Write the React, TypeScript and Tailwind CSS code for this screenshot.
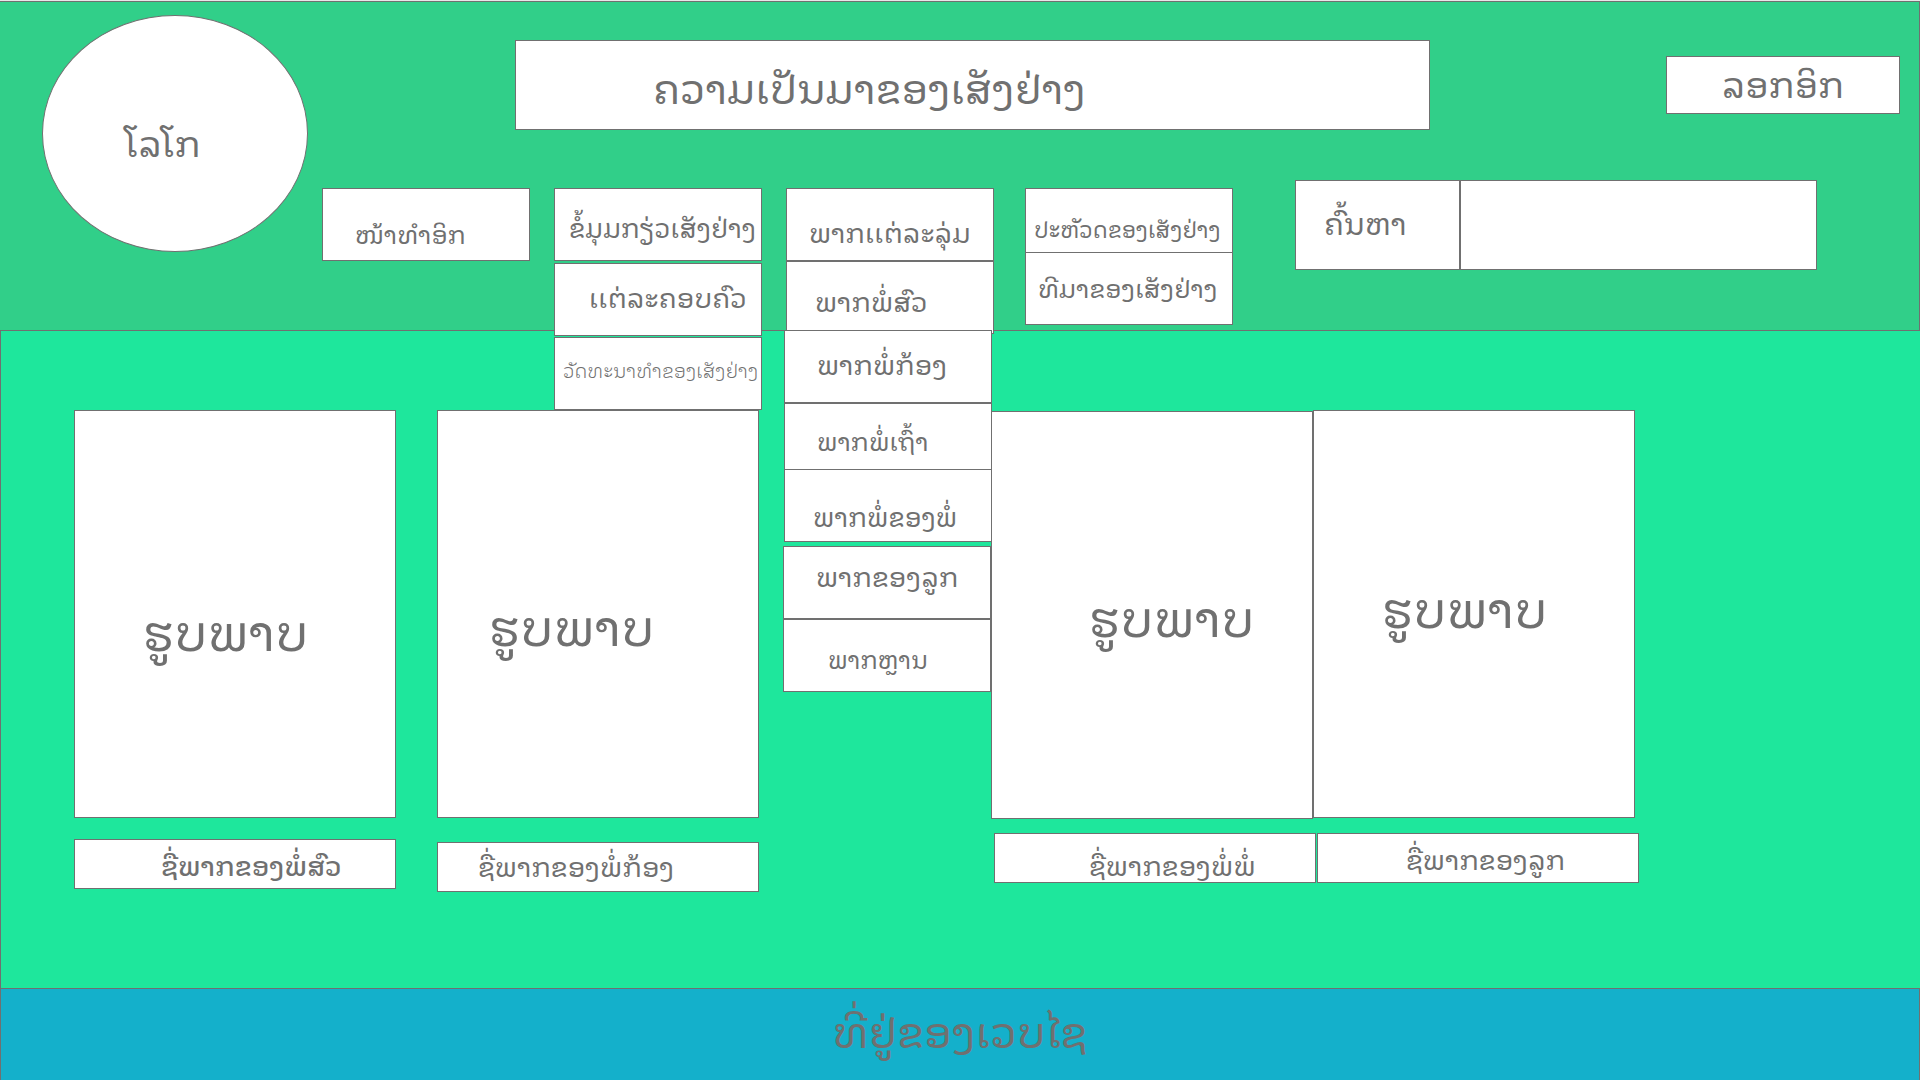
import type { ReactNode } from "react";

const box = "block border border-[#707070] bg-white leading-none whitespace-nowrap";

type Entry = { label: string; place: string };

const familyMenu: Entry[] = [
  { label: "ຂໍ້ມຸມກຽ່ວເສັງຢ່າງ", place: "pl-3.5 pt-6 text-[26px]" },
  { label: "ເເຕ່ລະຄອບຄົວ", place: "mt-0.5 pl-[34px] pt-[18px] text-[27px]" },
  { label: "ວັດທະນາທຳຂອງເສັງຢ່າງ", place: "mt-px pl-2 pt-[22px] text-[19px] font-light" },
];

const generationMenu: Entry[] = [
  { label: "ພາກເເຕ່ລະລຸ່ມ", place: "pl-[22px] pt-7 text-[27px]" },
  { label: "ພາກພໍ່ສົວ", place: "pl-7 pt-6 text-[27px]" },
  { label: "ພາກພໍ່ກ້ອງ", place: "-mt-1 -ml-0.5 mr-0.5 pl-8 pt-[18px] text-[27px]" },
  { label: "ພາກພໍ່ເຖົ້າ", place: "-ml-0.5 mr-0.5 pl-8 pt-6 text-[25px]" },
  { label: "ພາກພໍ່ຂອງພໍ່", place: "-mt-[7px] -ml-0.5 mr-0.5 pl-7 pt-8 text-[26px]" },
  { label: "ພາກຂອງລູກ", place: "mt-1 -ml-[3px] mr-[3px] pl-8 pt-3.5 text-[27px]" },
  { label: "ພາກຫຼານ", place: "-ml-[3px] mr-[3px] pl-11 pt-[26px] text-2xl" },
];

const historyMenu: Entry[] = [
  { label: "ປະຫັວດຂອງເສັງຢ່າງ", place: "pl-2 pt-7 text-[22px]" },
  { label: "ທີມາຂອງເສັງຢ່າງ", place: "-mt-[9px] pl-3 pt-[22px] text-[25px]" },
];

type Picture = { caption: string; column: string; image: string; name: string };

const pictures: Picture[] = [
  { caption: "ຊື່ພາກຂອງພໍ່ສົວ", column: "", image: "pl-[68px] pt-[193px]", name: "mt-[21px] pl-[86px] pt-2.5 font-medium" },
  { caption: "ຊື່ພາກຂອງພໍ່ກ້ອງ", column: "ml-[41px]", image: "pl-[51px] pt-[188px]", name: "mt-6 pl-10 pt-2" },
  { caption: "ຊື່ພາກຂອງພໍ່ພໍ່", column: "ml-[232px]", image: "mt-px pl-[97px] pt-[178px]", name: "mt-3.5 ml-[3px] -mr-[3px] pl-[94px] pt-4" },
  { caption: "ຊື່ພາກຂອງລູກ", column: "", image: "pl-[68px] pt-[170px]", name: "mt-[15px] ml-1 -mr-1 pl-22 pt-2.5" },
];

function Menu({ entries, className = "" }: { entries: Entry[]; className?: string }) {
  return (
    <div className={`relative h-[73px] w-52 ${className}`}>
      <ul className="absolute inset-x-0 top-0">
        {entries.map((e) => (
          <li key={e.label}>
            <NavBox className={e.place}>{e.label}</NavBox>
          </li>
        ))}
      </ul>
    </div>
  );
}

function NavBox({ className, children }: { className: string; children: ReactNode }) {
  return (
    <a href="#" className={`${box} relative h-[73px] ${className}`}>
      {children}
    </a>
  );
}

export default function App() {
  return (
    <div className="flex min-h-screen flex-col font-['Noto_Sans_Lao_Looped','DejaVu_Sans',sans-serif] text-[#707070]">
      <div className="h-px bg-[#e8e8e8]" />
      <header className="relative z-10 flex h-[329px] border-t border-r border-[#707070] bg-[#31cf89] pl-[42px]">
        <a
          href="#"
          className="mt-[13px] h-[237px] w-[266px] shrink-0 rounded-[50%] border border-[#707070] bg-white pt-[107px] pl-20 text-4xl leading-none"
        >
          ໂລໂກ
        </a>
        <div className="flex-1">
          <div className="flex pt-[38px] pr-[19px] pl-[207px]">
            <h1 className={`${box} h-[90px] flex-1 pt-6 pl-[137px] text-[41px]`}>
              ຄວາມເປັນມາຂອງເສັງຢ່າງ
            </h1>
            <button type="button" className={`${box} mt-4 ml-[236px] h-[58px] w-[234px] pb-1.5 text-4xl`}>
              ລອກອິກ
            </button>
          </div>
          <nav className="flex pt-[50px] pr-[102px] pl-3.5">
            <div className="mt-2 flex gap-6">
              <div className="w-52">
                <NavBox className="pt-8 pl-8 text-[25px]">ໜ້າທຳອິກ</NavBox>
              </div>
              <Menu entries={familyMenu} />
              <Menu entries={generationMenu} />
              <Menu entries={historyMenu} className="ml-[7px]" />
            </div>
            <form className="ml-[62px] flex flex-1">
              <label htmlFor="search" className={`${box} h-[90px] w-[165px] pt-[26px] pl-7 text-[30px]`}>
                ຄົ້ນຫາ
              </label>
              <input id="search" type="search" className={`${box} h-[90px] min-w-0 flex-1 px-4 text-2xl outline-none`} />
            </form>
          </nav>
        </div>
      </header>
      <main className="flex flex-1 border-t border-l border-[#707070] bg-[#1ee79c] pt-[79px] pr-[285px] pb-24 pl-[73px]">
        {pictures.map((p) => (
          <figure key={p.caption} className={`flex-1 ${p.column}`}>
            <div className={`${box} h-[408px] text-[50px] ${p.image}`}>ຮູບພາບ</div>
            <figcaption className={`${box} h-[50px] text-[27px] ${p.name}`}>{p.caption}</figcaption>
          </figure>
        ))}
      </main>
      <footer className="h-[93px] border border-[#707070] bg-[#14b0cb] pt-[18px] text-center text-[43px] leading-none">
        ທີ່ຢູ່ຂອງເວບໄຊ
      </footer>
    </div>
  );
}
